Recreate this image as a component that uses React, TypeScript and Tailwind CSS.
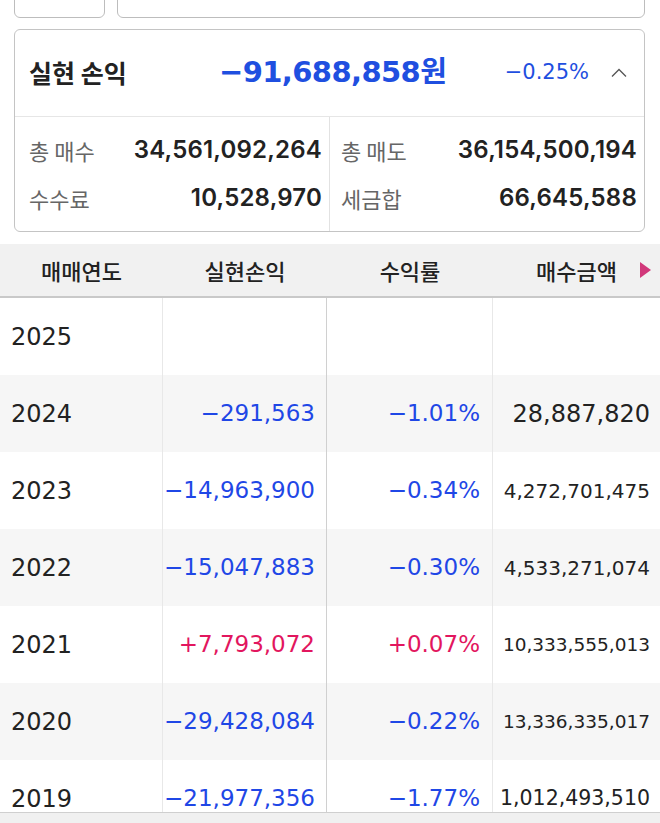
type Row = {
  year: string
  pnl?: string
  rate?: string
  buy?: string
  buySize?: string
  up?: boolean
}

const rows: Row[] = [
  { year: '2025' },
  { year: '2024', pnl: '−291,563', rate: '−1.01%', buy: '28,887,820', buySize: 'text-[24px]' },
  { year: '2023', pnl: '−14,963,900', rate: '−0.34%', buy: '4,272,701,475', buySize: 'text-[20px]' },
  { year: '2022', pnl: '−15,047,883', rate: '−0.30%', buy: '4,533,271,074', buySize: 'text-[20px]' },
  { year: '2021', pnl: '+7,793,072', rate: '+0.07%', buy: '10,333,555,013', buySize: 'text-[18.5px]', up: true },
  { year: '2020', pnl: '−29,428,084', rate: '−0.22%', buy: '13,336,335,017', buySize: 'text-[18.5px]' },
  { year: '2019', pnl: '−21,977,356', rate: '−1.77%', buy: '1,012,493,510', buySize: 'text-[20.5px]' },
]

const num = "font-['DejaVu_Sans','Noto_Sans_CJK_KR',sans-serif]"
const kr = "font-['Noto_Sans_CJK_KR','Noto_Sans',sans-serif]"
const inter = "font-['Inter','Noto_Sans_CJK_KR',sans-serif]"

function SummaryCell({ label, value, left }: { label: string; value: string; left?: boolean }) {
  return (
    <div className={`flex items-center justify-between h-12 ${left ? 'pl-[14px] pr-[7px]' : 'pl-[11px] pr-[7px]'}`}>
      <span className={`${kr} text-[22px] text-[#666]`}>{label}</span>
      <span className={`${inter} text-[24px] font-semibold text-[#222] tracking-[0.2px]`}>{value}</span>
    </div>
  )
}

export default function App() {
  return (
    <div className="w-[660px] h-[823px] overflow-hidden bg-white flex flex-col">
      {/* top inputs, cut off */}
      <div className="h-[18px] overflow-hidden flex items-end gap-[12px] pl-[14px] pr-[15px]">
        <div className="w-[91px] h-[40px] border border-[#bdbdbd] rounded-[6px] shrink-0" />
        <div className="flex-1 h-[40px] border border-[#bdbdbd] rounded-[6px]" />
      </div>

      {/* realized pnl card */}
      <div className="mt-[11px] ml-[14px] mr-[15px] border border-[#c4c4c4] rounded-[6px]">
        <div className="h-[87px] flex items-center border-b border-[#e6e6e6] pl-[14px] pr-[17px]">
          <span className={`${kr} w-[190px] text-[25px] font-bold text-[#222]`}>실현 손익</span>
          <span className={`${num} text-[29px] font-bold text-[#1f4fe0] tracking-[-0.6px]`}>−91,688,858원</span>
          <span className={`${num} ml-auto text-[21px] text-[#1f4fe0]`}>−0.25%</span>
          <svg width="16" height="10" viewBox="0 0 16 10" className="ml-[22px]">
            <path d="M1 8.5 L8 1.5 L15 8.5" fill="none" stroke="#555" strokeWidth="1.3" />
          </svg>
        </div>
        <div className="grid grid-cols-[315px_1fr] py-[9px]">
          <div className="border-r border-[#e2e2e2] -my-[9px] py-[9px]">
            <SummaryCell left label="총 매수" value="34,561,092,264" />
            <SummaryCell left label="수수료" value="10,528,970" />
          </div>
          <div>
            <SummaryCell label="총 매도" value="36,154,500,194" />
            <SummaryCell label="세금합" value="66,645,588" />
          </div>
        </div>
      </div>

      {/* yearly table */}
      <div className="mt-[12px] h-[569px] overflow-hidden border-b border-[#cfcfcf]">
        <div className="relative grid grid-cols-[163px_164px_166px_1fr] h-[54px] bg-[#f1f1f1] border-b-2 border-[#c9c9c9]">
          {['매매연도', '실현손익', '수익률', '매수금액'].map((h) => (
            <div key={h} className={`${kr} flex items-center justify-center text-[22px] font-medium text-[#222]`}>
              {h}
            </div>
          ))}
          <svg width="11" height="16" viewBox="0 0 11 16" className="absolute right-[9px] top-[18px]">
            <path d="M0 0 L11 8 L0 16 Z" fill="#d1387a" />
          </svg>
        </div>
        {rows.map((r, i) => (
          <div
            key={r.year}
            className={`grid grid-cols-[163px_164px_166px_1fr] h-[77px] ${i % 2 === 1 ? 'bg-[#f6f6f6]' : 'bg-white'}`}
          >
            <div className={`${num} flex items-center pl-[11px] text-[24px] text-[#222] border-r border-[#e8e8e8]`}>
              {r.year}
            </div>
            <div
              className={`${num} flex items-center justify-end pr-[11px] text-[23px] border-r border-[#d0d0d0] ${r.up ? 'text-[#e2165e]' : 'text-[#1f47e6]'}`}
            >
              {r.pnl}
            </div>
            <div
              className={`${num} flex items-center justify-end pr-[12px] text-[23px] border-r border-[#e8e8e8] ${r.up ? 'text-[#e2165e]' : 'text-[#1f47e6]'}`}
            >
              {r.rate}
            </div>
            <div className={`${num} flex items-center justify-end pr-[10px] text-[#222] ${r.buySize ?? 'text-[20px]'}`}>
              {r.buy}
            </div>
          </div>
        ))}
      </div>
      <div className="flex-1 bg-[#f0f0f0]" />
    </div>
  )
}
